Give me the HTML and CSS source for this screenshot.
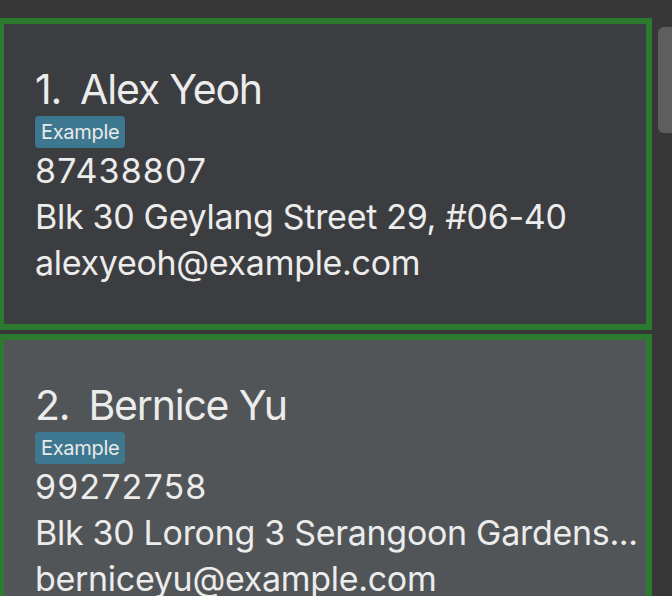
FILE: index.html
```html
<!DOCTYPE html>
<html>
<head>
<meta charset="utf-8">
<link rel="stylesheet" href="styles.css">
</head>
<body>
<div class="app">
  <div class="list">
    <div class="card card-even">
      <div class="name-row"><span class="index">1.</span><span class="name">Alex Yeoh</span></div>
      <div class="tags"><span class="tag">Example</span></div>
      <div class="field phone">87438807</div>
      <div class="field">Blk 30 Geylang Street 29, #06-40</div>
      <div class="field">alexyeoh@example.com</div>
    </div>
    <div class="card card-odd">
      <div class="name-row"><span class="index">2.</span><span class="name">Bernice Yu</span></div>
      <div class="tags"><span class="tag">Example</span></div>
      <div class="field phone">99272758</div>
      <div class="field">Blk 30 Lorong 3 Serangoon Gardens...</div>
      <div class="field">berniceyu@example.com</div>
    </div>
  </div>
  <div class="scrollbar">
    <div class="thumb"></div>
  </div>
</div>
</body>
</html>
```
FILE: styles.css
```css
html, body {
  margin: 0;
  padding: 0;
  background: #373737;
  height: 100%;
  overflow: hidden;
}
.app {
  display: flex;
  width: 672px;
  height: 596px;
  overflow: hidden;
  font-family: Inter, "Noto Sans", sans-serif;
  color: #ececec;
}
.list {
  width: 654px;
  margin-left: -2px;
  padding-top: 18px;
  display: flex;
  flex-direction: column;
  gap: 4px;
  flex: none;
}
.card {
  border: 6px solid #2c7a2f;
  padding: 41px 10px 38px 31px;
  display: flex;
  flex-direction: column;
  flex: none;
}
.card-even { background: #3c3d40; }
.card-odd { background: #515558; }
.name-row {
  font-size: 41px;
  line-height: 48px;
  display: flex;
  gap: 19px;
  white-space: nowrap;
  letter-spacing: -1.2px;
}
.tags {
  margin-top: 3px;
  display: flex;
}
.tag {
  background: #3d7890;
  border-radius: 4px;
  height: 32px;
  line-height: 32px;
  font-size: 20px;
  letter-spacing: -0.3px;
  padding: 0 6px;
  color: #eaeaea;
}
.field {
  font-size: 34px;
  line-height: 46px;
  white-space: nowrap;
  letter-spacing: -0.3px;
}
.field.phone {
  letter-spacing: 1.1px;
}
.scrollbar {
  flex: 1;
  padding-top: 27px;
  padding-left: 6px;
}
.thumb {
  height: 106px;
  background: #5e5e5e;
  border-radius: 6px 0 0 6px;
}
```
